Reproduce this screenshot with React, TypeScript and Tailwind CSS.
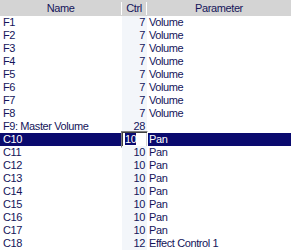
import React from 'react';

type Row = { name: string; ctrl: string; param: string };

const rows: Row[] = [
  { name: 'F1', ctrl: '7', param: 'Volume' },
  { name: 'F2', ctrl: '7', param: 'Volume' },
  { name: 'F3', ctrl: '7', param: 'Volume' },
  { name: 'F4', ctrl: '7', param: 'Volume' },
  { name: 'F5', ctrl: '7', param: 'Volume' },
  { name: 'F6', ctrl: '7', param: 'Volume' },
  { name: 'F7', ctrl: '7', param: 'Volume' },
  { name: 'F8', ctrl: '7', param: 'Volume' },
  { name: 'F9: Master Volume', ctrl: '28', param: '' },
  { name: 'C10', ctrl: '10', param: 'Pan' },
  { name: 'C11', ctrl: '10', param: 'Pan' },
  { name: 'C12', ctrl: '10', param: 'Pan' },
  { name: 'C13', ctrl: '10', param: 'Pan' },
  { name: 'C14', ctrl: '10', param: 'Pan' },
  { name: 'C15', ctrl: '10', param: 'Pan' },
  { name: 'C16', ctrl: '10', param: 'Pan' },
  { name: 'C17', ctrl: '10', param: 'Pan' },
  { name: 'C18', ctrl: '12', param: 'Effect Control 1' },
];

const SELECTED = 9;

export default function App() {
  return (
    <div className="w-[291px] h-[252px] bg-white overflow-hidden text-[11px] leading-[13px] tracking-[-0.4px] text-[#14145a] font-['Liberation_Sans',Arial,sans-serif]">
      {/* header */}
      <div className="flex h-[16px] bg-[#d4d4d4] items-center">
        <div className="w-[122px] text-center border-r border-white">Name</div>
        <div className="w-[25px] text-center border-r border-white">Ctrl</div>
        <div className="flex-1 text-center">Parameter</div>
      </div>

      {rows.map((r, i) => {
        const sel = i === SELECTED;
        return (
          <div
            key={r.name}
            className={`relative flex h-[13px] ${sel ? 'bg-[#0a0a6e] text-white' : ''}`}
          >
            <div className="w-[122px] pl-[3px] whitespace-nowrap">{r.name}</div>
            <div className={`w-[25px] text-right pr-[2px] ${sel ? '' : 'bg-[#f3f6fa]'}`}>{sel ? '' : r.ctrl}</div>
            <div className="flex-1 pl-[2px] whitespace-nowrap">{r.param}</div>
            {sel && (
              <div className="absolute left-[121px] top-[-2px] w-[27px] h-[17px] bg-white border border-t-[#808080] border-l-[#808080] border-b-white border-r-white shadow-[inset_1px_1px_0_#404040,inset_-1px_-1px_0_#d4d4d4] pl-[3px] pt-[1px]">
                <span className="bg-[#0a0a6e] text-white leading-[12px] inline-block">{r.ctrl}</span>
              </div>
            )}
          </div>
        );
      })}
    </div>
  );
}
